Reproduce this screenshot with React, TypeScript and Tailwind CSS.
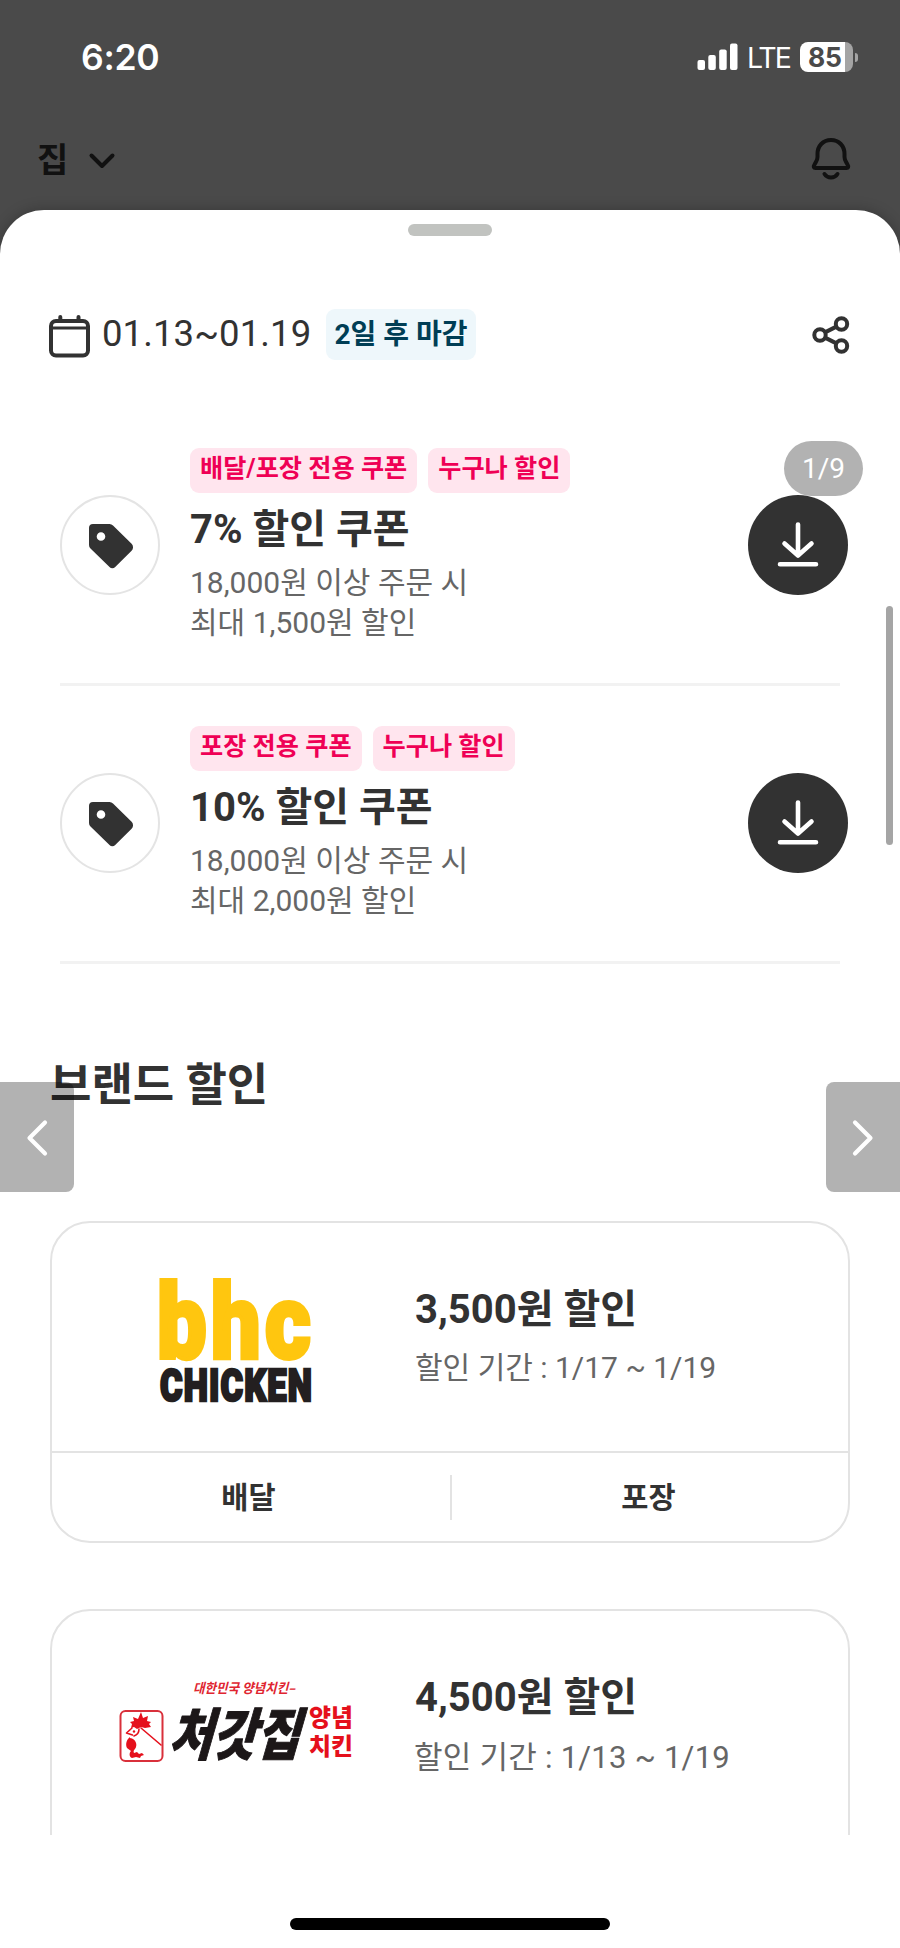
import type { ReactNode } from "react";

const coupons = [
  {
    title: "7% 할인 쿠폰",
    tags: ["배달/포장 전용 쿠폰", "누구나 할인"],
    limit: "최대 1,500원 할인",
  },
  {
    title: "10% 할인 쿠폰",
    tags: ["포장 전용 쿠폰", "누구나 할인"],
    limit: "최대 2,000원 할인",
  },
];

function StatusBar() {
  return (
    <div className="flex h-[114px] items-center justify-between pr-[42px] pl-[81px] text-white">
      <span className="pt-[2px] font-['Inter'] text-[35.500px] leading-none font-semibold tracking-[-0.3px]">
        6:20
      </span>
      <div className="flex items-center">
        <svg className="h-[28px] w-[41px]" viewBox="0 0 41 28" fill="currentColor">
          <rect x="0.5" y="17" width="7.5" height="10" rx="2" />
          <rect x="11.3" y="12" width="7.5" height="15" rx="2" />
          <rect x="22.2" y="6.5" width="7.5" height="20.5" rx="2" />
          <rect x="33" y="0.5" width="7.5" height="26.5" rx="2" />
        </svg>
        <span className="ml-[9px] w-[44px] pt-[3px] font-['Inter'] text-[28.500px] leading-none tracking-[-2px]">
          LTE
        </span>
        <div className="ml-[9px] flex h-[30px] w-[53px] items-center overflow-hidden rounded-[8px] bg-[linear-gradient(to_right,#fff_45px,#a4a4a4_45px)] pl-[8px]">
          <span className="font-['Inter'] text-[26.500px] leading-none font-bold tracking-[-0.3px] text-[#4a4a4a]">
            85
          </span>
        </div>
        <div className="ml-[2px] h-[9px] w-[3px] rounded-r-full bg-[#a4a4a4]" />
      </div>
    </div>
  );
}

function AddressBar() {
  return (
    <div className="flex h-[96px] items-start justify-between pt-[22px] pr-[49px] pl-[37px] text-[#111]">
      <div className="flex items-center">
        <span className="text-[34px] leading-[48px] font-bold">집</span>
        <svg
          className="mt-[2px] ml-[20px] h-[18px] w-[28px]"
          viewBox="0 0 28 18"
          fill="none"
          stroke="currentColor"
          strokeWidth="4"
          strokeLinecap="round"
          strokeLinejoin="round"
        >
          <path d="M3.5 3.5 14 14 24.500 3.500" />
        </svg>
      </div>
      <svg
        className="h-[44px] w-[40px]"
        viewBox="0 0 40 44"
        fill="none"
        stroke="currentColor"
        strokeWidth="4"
        strokeLinecap="round"
        strokeLinejoin="round"
      >
        <path d="M20 4C12 4 6.500 10 6.500 18v3c0 2-.7 3.500-1.700 5.200L3.500 28.500C2 31 3 32 4.500 32h31c1.500 0 2.500-1 1-3.500l-1.300-2.300c-1-1.700-1.700-3.200-1.700-5.200v-3C33.500 10 28 4 20 4Z" />
        <path d="M13.500 38c1.500 2.300 4 3.500 6.500 3.500s5-1.200 6.500-3.500" />
      </svg>
    </div>
  );
}

function PeriodRow() {
  return (
    <div className="flex h-[51px] items-center pr-[50px] pl-[48px] text-[#323232]">
      <svg
        className="mt-[2px] h-[44px] w-[43px] shrink-0"
        viewBox="0 0 43 44"
        fill="none"
        stroke="currentColor"
        strokeWidth="4"
        strokeLinecap="round"
      >
        <rect x="3" y="7" width="37" height="34.500" rx="5" />
        <path d="M4 14h35" strokeWidth="3.200" />
        <path d="M12.300 3v4M30.500 3v4" />
      </svg>
      <span className="ml-[11px] w-[209px] text-[36.500px] leading-none tracking-[0.1px]">
        01.13~01.19
      </span>
      <span className="ml-[15px] h-[51px] w-[150px] rounded-[9px] bg-[#eef7fb] text-center text-[28px] leading-[51px] font-bold text-[#003e55]">
        2일 후 마감
      </span>
      <svg
        className="ml-auto h-[38px] w-[38px]"
        viewBox="0 0 38 38"
        fill="none"
        stroke="currentColor"
        strokeWidth="4"
      >
        <circle cx="8" cy="19" r="5.700" />
        <circle cx="29.500" cy="8" r="5.700" />
        <circle cx="29.500" cy="30" r="5.700" />
        <path d="m13 16.400 11.400-5.800M13 21.600l11.400 5.800" />
      </svg>
    </div>
  );
}

function TagIcon() {
  return (
    <svg className="h-[46px] w-[46px]" viewBox="0 0 46 46">
      <path
        fill="#323232"
        fillRule="evenodd"
        d="M5 1h16.500a5 5 0 0 1 3.500 1.500l18.600 18.200a5 5 0 0 1 0 7L27.200 44a4 4 0 0 1-5.700 0L2.500 25.500A5 5 0 0 1 1 22V5a4 4 0 0 1 4-4ZM13 9.200a4.300 4.300 0 1 0 0 8.600 4.300 4.300 0 0 0 0-8.600Z"
      />
    </svg>
  );
}

function CouponRow({ coupon }: { coupon: (typeof coupons)[number] }) {
  return (
    <div className="mr-[52px] ml-[60px] flex h-[277px] items-start">
      <div className="mt-[88px] flex h-[100px] w-[100px] shrink-0 items-center justify-center rounded-full border-2 border-[#e4e4e4] pt-[1px] pl-[1px]">
        <TagIcon />
      </div>
      <div className="ml-[30px] grow pt-[41px]">
        <div className="flex gap-[11px]">
          {coupon.tags.map((tag) => (
            <span
              key={tag}
              className="h-[45px] rounded-[9px] bg-[#ffe5ee] px-[10px] text-[25.200px] leading-[42px] font-bold whitespace-nowrap text-[#ef0055]"
            >
              {tag}
            </span>
          ))}
        </div>
        <h3 className="mt-[9px] text-[40px] leading-[55px] font-bold">
          {coupon.title}
        </h3>
        <p className="mt-[6px] text-[30px] leading-[40px] text-[#666]">
          18,000원 이상 주문 시<br />
          {coupon.limit}
        </p>
      </div>
      <button className="mt-[88px] flex h-[100px] w-[100px] shrink-0 items-center justify-center rounded-full bg-[#323232]">
        <svg
          className="mb-[2px] h-[46px] w-[42px]"
          viewBox="0 0 42 46"
          fill="none"
          stroke="#fff"
          strokeWidth="4.600"
          strokeLinecap="round"
          strokeLinejoin="round"
        >
          <path d="M21 3.500V33.500M7.500 22.500 21 34.500 34.500 22.500M3 43.200h36" />
        </svg>
      </button>
    </div>
  );
}

interface BrandCardProps {
  logo: ReactNode;
  price: string;
  children: ReactNode;
}

function BrandCard({ logo, price, children }: BrandCardProps) {
  return (
    <div className="mx-[50px] h-[322px] shrink-0 rounded-[40px] border-2 border-[#e3e3e3]">
      <div className="flex h-[228px] items-start">
        <div className="ml-[62px] w-[301px] pt-[18px]">{logo}</div>
        <div className="pt-[60px]">
          <h3 className="text-[40px] leading-[54px] font-bold">{price}</h3>
          {children}
        </div>
      </div>
      <div className="flex h-[90px] items-center border-t-2 border-[#e3e3e3] text-center text-[29.500px] leading-[44px] font-bold">
        <span className="flex-1 pt-[2px] pr-[3px]">배달</span>
        <span className="ml-[2px] h-[45px] w-[2px] bg-[#e3e3e3]" />
        <span className="flex-1 pt-[2px] pr-[3px]">포장</span>
      </div>
    </div>
  );
}

function BhcLogo() {
  return (
    <svg className="h-[180px] w-[250px]" viewBox="0 -30 250 180">
      <text
        x="43"
        y="87"
        fontFamily="Roboto, sans-serif"
        fontWeight="900"
        fontSize="103"
        letterSpacing="5"
        fill="#ffc60f"
        stroke="#ffc60f"
        strokeWidth="4"
        textLength="158"
        lengthAdjust="spacingAndGlyphs"
      >
        bhc
      </text>
      <text
        x="46"
        y="130"
        fontFamily="Roboto, sans-serif"
        fontWeight="900"
        fontSize="45"
        letterSpacing="1.500"
        fill="#231f20"
        stroke="#231f20"
        strokeWidth="2.600"
        textLength="153"
        lengthAdjust="spacingAndGlyphs"
      >
        CHICKEN
      </text>
    </svg>
  );
}

function CheogajipLogo() {
  return (
    <svg
      className="h-[160px] w-[250px]"
      viewBox="0 -30 250 160"
      fontFamily="'Noto Sans CJK KR', sans-serif"
    >
      <text
        transform="translate(79 34) skewX(-14)"
        fontSize="13.500"
        fontWeight="700"
        fill="#e02530"
        textLength="102"
        lengthAdjust="spacingAndGlyphs"
      >
        대한민국 양념치킨–
      </text>
      <rect x="6.500" y="52" width="42" height="50" rx="5" fill="none" stroke="#d9303b" strokeWidth="2" />
      {/* rooster: comb, head and back line, wattle, feet */}
      <path
        fill="#e5101c"
        d="M17 69l1-4-2-2 4-1-1-4 5 2 3-7 2 6 5-2-1 5 4 1-2 2 2 3-6 1-4-1-4 2-3-2Z"
      />
      <path
        fill="none"
        stroke="#e5101c"
        strokeWidth="1.600"
        strokeLinecap="round"
        strokeLinejoin="round"
        d="M18 69 12.500 74l6 2M25 70c0 4-2 6-5 7M27 69 47 86"
      />
      <circle cx="20" cy="72.500" r="1.200" fill="#e5101c" />
      <path
        fill="#e5101c"
        d="M16 78c-3 2-5 7-3 11l4 3c-2 2-2 6 1 7l4-1 4 1 1-2 3-1-2-2-3 1-2-2-3 1c-1-2 0-3 1-4 3-4 1-10-5-11Z"
      />
      <text
        transform="translate(54 96) skewX(-16)"
        fontSize="56"
        fontWeight="900"
        fill="#1c1718"
        stroke="#1c1718"
        strokeWidth="1"
        strokeLinejoin="round"
        textLength="131"
        lengthAdjust="spacingAndGlyphs"
      >
        처갓집
      </text>
      <g fontSize="24" fontWeight="900" fill="#e5101c">
        <text x="195" y="67" textLength="44" lengthAdjust="spacingAndGlyphs">
          양념
        </text>
        <text x="195" y="96" textLength="44" lengthAdjust="spacingAndGlyphs">
          치킨
        </text>
      </g>
    </svg>
  );
}

function Chevron({ d }: { d: string }) {
  return (
    <svg
      className="mt-[1px] h-[38px] w-[22px]"
      viewBox="0 0 22 38"
      fill="none"
      stroke="#fff"
      strokeWidth="4.200"
      strokeLinecap="round"
      strokeLinejoin="round"
    >
      <path d={d} />
    </svg>
  );
}

export default function App() {
  return (
    <div className="relative h-[1948px] w-[900px] overflow-hidden bg-[#4a4a4a] font-['Roboto','Noto_Sans_CJK_KR',sans-serif] text-[#323232]">
      <StatusBar />
      <AddressBar />

      <main className="h-[1738px] rounded-t-[44px] bg-white pt-[14px] shadow-[0_0_14px_rgba(0,0,0,0.25)]">
        <div className="mx-auto h-[12px] w-[84px] rounded-full bg-[#c1c3c0]" />
        <div className="pt-[73px]">
          <PeriodRow />
        </div>

        <div className="pt-[47px]">
          {coupons.map((coupon) => (
            <div key={coupon.title}>
              <CouponRow coupon={coupon} />
              <div className="mx-[60px] -mt-[1px] -mb-[1px] h-[3px] bg-[#f2f2f2]" />
            </div>
          ))}
        </div>

        <h2 className="mt-[93px] ml-[50px] text-[45px] leading-[60px] font-bold">
          브랜드 할인
        </h2>

        {/* the list is cut off above the home indicator */}
        <div className="mt-[105px] flex h-[614px] flex-col gap-[66px] overflow-hidden">
          <BrandCard logo={<BhcLogo />} price="3,500원 할인">
            <p className="mt-[11px] text-[30px] leading-[40px] text-[#666]">
              할인 기간 : 1/17 ~ 1/19
            </p>
          </BrandCard>
          <BrandCard logo={<CheogajipLogo />} price="4,500원 할인">
            <p className="mt-[13px] -ml-px text-[31px] leading-[40px] tracking-[0.25px] text-[#666]">
              할인 기간 : 1/13 ~ 1/19
            </p>
          </BrandCard>
        </div>
      </main>

      <div className="absolute top-[441px] left-[784px] flex h-[55px] w-[79px] items-center justify-center rounded-full bg-black/30 text-[28px] text-white">
        1/9
      </div>
      <div className="absolute top-[606px] right-[7px] h-[239px] w-[7px] rounded-full bg-[#a5a5a5]" />
      <button className="absolute top-[1082px] left-0 flex h-[110px] w-[74px] items-center justify-center rounded-r-[8px] bg-black/30">
        <Chevron d="M19 3.500 3.500 19 19 34.500" />
      </button>
      <button className="absolute top-[1082px] right-0 flex h-[110px] w-[74px] items-center justify-center rounded-l-[8px] bg-black/30">
        <Chevron d="M3 3.500 18.500 19 3 34.500" />
      </button>
      <div className="absolute bottom-[18px] left-[290px] h-[12px] w-[320px] rounded-full bg-black" />
    </div>
  );
}
